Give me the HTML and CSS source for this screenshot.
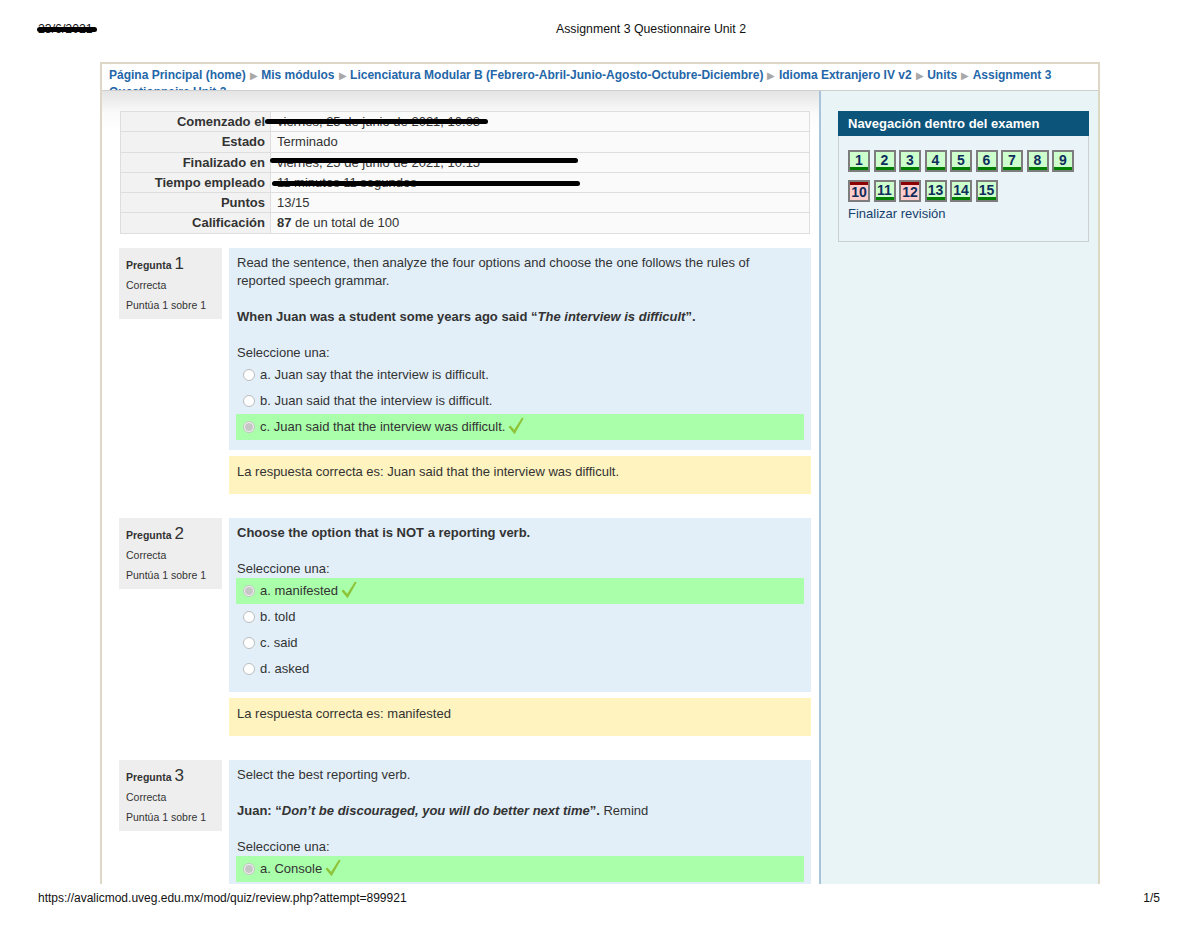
FILE: index.html
```html
<!DOCTYPE html>
<html lang="es">
<head>
<meta charset="utf-8">
<title>Assignment 3 Questionnaire Unit 2</title>
<link rel="stylesheet" href="styles.css">
</head>
<body>
<div class="pdf-head">
  <span class="date">23/6/2021<i class="redact redact-date"></i></span>
  <span class="doc-title">Assignment 3 Questionnaire Unit 2</span>
</div>

<div class="frame">
  <div class="breadcrumb">
    <a>Página Principal (home)</a><span class="sep">▶</span><a>Mis módulos</a><span class="sep">▶</span><a>Licenciatura Modular B (Febrero-Abril-Junio-Agosto-Octubre-Diciembre)</a><span class="sep">▶</span><a>Idioma Extranjero IV v2</a><span class="sep">▶</span><a>Units</a><span class="sep">▶</span><a>Assignment 3 Questionnaire Unit 2</a>
  </div>
  <div class="main">
    <div class="content">
      <div class="summary-wrap">
        <table class="summary">
          <tr><th>Comenzado el</th><td>viernes, 25 de junio de 2021, 10:03</td></tr>
          <tr><th>Estado</th><td>Terminado</td></tr>
          <tr><th>Finalizado en</th><td>viernes, 25 de junio de 2021, 10:15</td></tr>
          <tr><th>Tiempo empleado</th><td>11 minutos 11 segundos</td></tr>
          <tr><th>Puntos</th><td>13/15</td></tr>
          <tr><th>Calificación</th><td><b>87</b> de un total de 100</td></tr>
        </table>
        <i class="redact redact-1"></i>
        <i class="redact redact-2"></i>
        <i class="redact redact-3"></i>
      </div>

      <div class="que">
        <div class="info">
          <div class="qno"><b>Pregunta</b> <span class="num">1</span></div>
          <div class="state">Correcta</div>
          <div class="grade">Puntúa 1 sobre 1</div>
        </div>
        <div class="qbody">
          <div class="formulation">
            <p>Read the sentence, then analyze the four options and choose the one follows the rules of reported speech grammar.</p>
            <p><b>When Juan was a student some years ago said “<i>The interview is difficult</i>”.</b></p>
            <div class="prompt">Seleccione una:</div>
            <div class="opt"><span class="radio"></span>a. Juan say that the interview is difficult.</div>
            <div class="opt"><span class="radio"></span>b. Juan said that the interview is difficult.</div>
            <div class="opt correct"><span class="radio checked"></span>c. Juan said that the interview was difficult.<svg class="tick" viewBox="0 0 16 18" width="16" height="18"><path d="M0.5 10 L2.4 8.6 L6.2 12.8 L14 0.6 L15.6 1.6 L6.6 17.2 Z"/></svg></div>
          </div>
          <div class="feedback">La respuesta correcta es: Juan said that the interview was difficult.</div>
        </div>
      </div>

      <div class="que">
        <div class="info">
          <div class="qno"><b>Pregunta</b> <span class="num">2</span></div>
          <div class="state">Correcta</div>
          <div class="grade">Puntúa 1 sobre 1</div>
        </div>
        <div class="qbody">
          <div class="formulation">
            <p><b>Choose the option that is NOT a reporting verb.</b></p>
            <div class="prompt">Seleccione una:</div>
            <div class="opt correct"><span class="radio checked"></span>a. manifested<svg class="tick" viewBox="0 0 16 18" width="16" height="18"><path d="M0.5 10 L2.4 8.6 L6.2 12.8 L14 0.6 L15.6 1.6 L6.6 17.2 Z"/></svg></div>
            <div class="opt"><span class="radio"></span>b. told</div>
            <div class="opt"><span class="radio"></span>c. said</div>
            <div class="opt"><span class="radio"></span>d. asked</div>
          </div>
          <div class="feedback">La respuesta correcta es: manifested</div>
        </div>
      </div>

      <div class="que">
        <div class="info">
          <div class="qno"><b>Pregunta</b> <span class="num">3</span></div>
          <div class="state">Correcta</div>
          <div class="grade">Puntúa 1 sobre 1</div>
        </div>
        <div class="qbody">
          <div class="formulation">
            <p>Select the best reporting verb.</p>
            <p><b>Juan: “<i>Don’t be discouraged, you will do better next time</i>”.</b> Remind</p>
            <div class="prompt">Seleccione una:</div>
            <div class="opt correct"><span class="radio checked"></span>a. Console<svg class="tick" viewBox="0 0 16 18" width="16" height="18"><path d="M0.5 10 L2.4 8.6 L6.2 12.8 L14 0.6 L15.6 1.6 L6.6 17.2 Z"/></svg></div>
            <div class="opt"><span class="radio"></span>b. Remind</div>
          </div>
        </div>
      </div>
    </div>

    <div class="side">
      <div class="navblock">
        <div class="nav-head">Navegación dentro del examen</div>
        <div class="nav-body">
          <div class="buttons">
            <span class="qbtn ok">1</span><span class="qbtn ok">2</span><span class="qbtn ok">3</span><span class="qbtn ok">4</span><span class="qbtn ok">5</span><span class="qbtn ok">6</span><span class="qbtn ok">7</span><span class="qbtn ok">8</span><span class="qbtn ok">9</span>
            <span class="qbtn bad">10</span><span class="qbtn ok">11</span><span class="qbtn bad">12</span><span class="qbtn ok">13</span><span class="qbtn ok">14</span><span class="qbtn ok">15</span>
          </div>
          <a class="finish">Finalizar revisión</a>
        </div>
      </div>
    </div>
  </div>
</div>

<div class="pdf-foot">
  <span>https://avalicmod.uveg.edu.mx/mod/quiz/review.php?attempt=899921</span>
  <span>1/5</span>
</div>
</body>
</html>
```

FILE: styles.css
```css
* { box-sizing: border-box; }

body {
  margin: 0;
  background: #fff;
  font-family: "Liberation Sans", Arial, sans-serif;
  color: #333;
}

.redact {
  position: absolute;
  display: block;
  height: 5px;
  background: #000;
  border-radius: 3px;
}

/* printed page header */
.pdf-head {
  height: 62px;
  padding: 21px 0 0 38px;
  display: grid;
  grid-template-columns: 518px auto;
  font-size: 12.3px;
  line-height: 16px;
  color: #111;
}
.date { position: relative; }
.redact-date { left: -1px; top: 6px; width: 60px; height: 5px; }

/* framed page */
.frame {
  margin-left: 100px;
  width: 1000px;
  height: 822px;
  border: 2px solid #dcd8c5;
  border-bottom: 0;
  overflow: hidden;
  display: flex;
  flex-direction: column;
}

.breadcrumb {
  height: 27px;
  flex: none;
  padding: 3px 0 0 7px;
  overflow: hidden;
  font-size: 12px;
  line-height: 16px;
  font-weight: bold;
  color: #2466a8;
  border-bottom: 1px solid #cfcfcf;
  background: #fff;
}
.breadcrumb .sep {
  color: #a8a8a8;
  font-weight: normal;
  font-size: 10px;
  margin: 0 3.5px 0 4px;
}

.main {
  flex: 1;
  display: flex;
  min-height: 0;
}

.content {
  width: 717px;
  flex: none;
  padding: 20px 0 0 17px;
  background: linear-gradient(#e4e4e4, #fafafa 22px, #fff 40px);
}

.side {
  flex: 1;
  background: #e9f4f7;
  border-left: 2px solid #a9c3da;
  padding: 20px 0 0 17px;
}

/* summary table */
.summary-wrap {
  position: relative;
  margin-left: 1px;
  width: 690px;
  margin-bottom: 14px;
}
.summary {
  width: 690px;
  border-collapse: collapse;
  font-size: 13px;
  line-height: 17.3px;
}
.summary th, .summary td {
  border: 1px solid #dedede;
  padding: 1px 6px;
}
.summary th {
  width: 150px;
  text-align: right;
  background: #f2f2f2;
  padding-right: 5px;
  color: #333;
}
.summary td {
  background: #fafafa;
}
.redact-1 { left: 145px; top: 8px; width: 223px; }
.redact-2 { left: 150px; top: 47px; width: 308px; }
.redact-3 { left: 152px; top: 70px; width: 308px; }

/* questions */
.que {
  display: flex;
  gap: 7px;
  margin-bottom: 24px;
}
.info {
  width: 103px;
  flex: none;
  align-self: flex-start;
  background: #eeeeee;
  padding: 6px 7px 4px;
  font-size: 10.5px;
  color: #333;
}
.qno { line-height: 20px; }
.qno b { font-size: 10.5px; }
.qno .num { font-size: 17px; }
.state { line-height: 20px; }
.grade { line-height: 20px; }

.qbody { width: 582px; }

.formulation {
  background: #e2eff9;
  padding: 6px 7px 10px;
  font-size: 13px;
  line-height: 18px;
  color: #333;
}
.formulation p {
  margin: 0 8px 18px 1px;
}
.prompt { margin-left: 1px; }

.opt {
  height: 26px;
  padding-left: 7px;
  display: flex;
  align-items: center;
  white-space: nowrap;
}
.opt.correct { background: #aaffaa; }

.radio {
  width: 12px;
  height: 12px;
  border-radius: 50%;
  border: 1px solid #bcbcbc;
  background: #fff;
  margin-right: 5px;
  flex: none;
}
.radio.checked {
  background: radial-gradient(circle, #c6c6c6 0 3.5px, #f0f0f0 4.5px);
  border-color: #c4c4c4;
}

.tick {
  margin-left: 3px;
  fill: #8dc43a;
  position: relative;
  top: -1px;
}

.feedback {
  margin-top: 6px;
  background: #fff3bf;
  padding: 7px 8px 13px;
  font-size: 13px;
  line-height: 18px;
  color: #333;
}

/* navigation block */
.navblock {
  width: 251px;
  border: 1px solid #c9cfd2;
  background: #eaf4f8;
}
.nav-head {
  height: 25px;
  background: #0c5479;
  color: #fff;
  font-weight: bold;
  font-size: 13px;
  line-height: 25px;
  padding-left: 10px;
  margin: -1px -1px 0;
}
.nav-body {
  padding: 14px 9px 18px 9px;
}
.buttons {
  display: flex;
  flex-wrap: wrap;
  column-gap: 3.5px;
  row-gap: 8px;
  width: 232px;
}
.qbtn {
  width: 22px;
  height: 22px;
  border: 2px solid #7d7d7d;
  font-weight: bold;
  font-size: 14px;
  line-height: 17px;
  text-align: center;
  color: #0f2d5c;
}
.qbtn.ok {
  background: #ccffcc;
  box-shadow: inset 0 -3px 0 #008000;
}
.qbtn.bad {
  background: #ffcccc;
  box-shadow: inset 0 3px 0 #8b0000;
  line-height: 21px;
}
.finish {
  display: block;
  margin-top: 3px;
  font-size: 13px;
  line-height: 18px;
  color: #16406d;
}

/* printed page footer */
.pdf-foot {
  display: flex;
  justify-content: space-between;
  padding: 6px 40px 0 38px;
  font-size: 12px;
  line-height: 16px;
  color: #111;
}
```
